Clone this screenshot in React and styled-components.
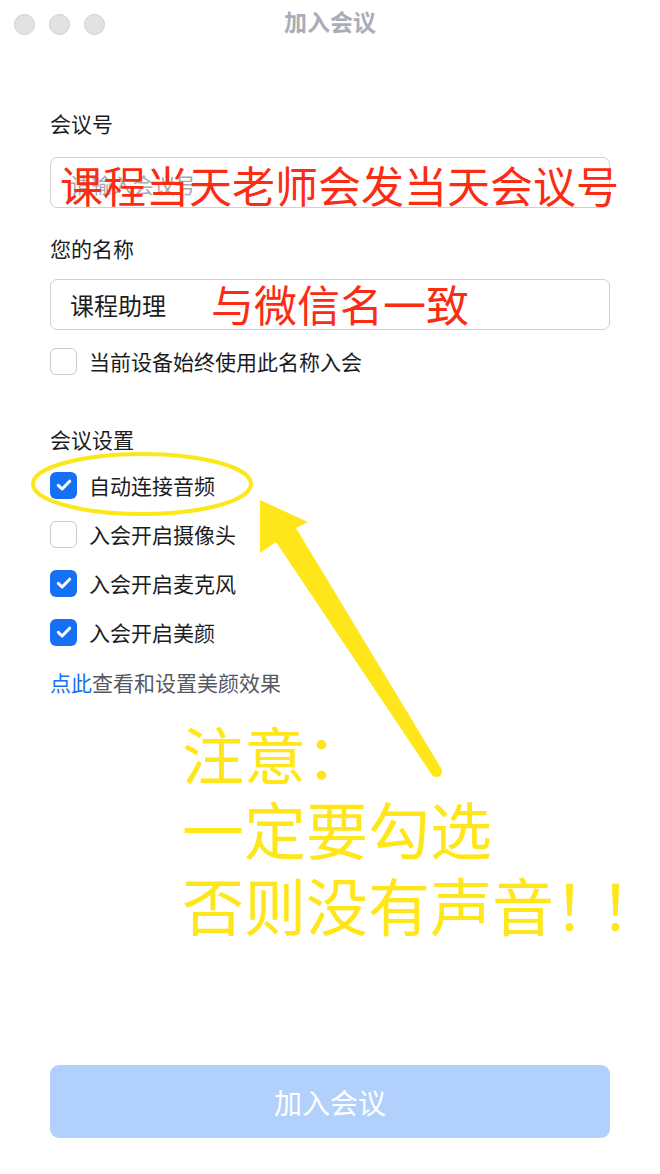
import React from "react";
import styled, { createGlobalStyle } from "styled-components";

const Global = createGlobalStyle`
  html, body { margin: 0; padding: 0; background: #ffffff; }
  body { font-family: "Noto Sans CJK SC", "Noto Sans", sans-serif; }
  * { box-sizing: border-box; }
`;

const FONT = `"Noto Sans CJK SC", "Noto Sans", sans-serif`;

const Window = styled.div`
  position: relative;
  width: 660px;
  height: 1174px;
  display: flex;
  flex-direction: column;
  background: #ffffff;
  overflow: hidden;
  font-family: ${FONT};
`;

const TitleBar = styled.div`
  position: relative;
  height: 48px;
  display: flex;
  align-items: center;
  justify-content: center;
  flex-shrink: 0;
`;

const Lights = styled.div`
  position: absolute;
  left: 14px;
  top: 14px;
  display: flex;
  gap: 14px;
`;

const Light = styled.span`
  width: 21px;
  height: 21px;
  border-radius: 50%;
  background: #e2e2e2;
  border: 1px solid #cfcfcf;
`;

const Title = styled.div`
  font-size: 23px;
  font-weight: 700;
  color: #a9adb8;
  line-height: 1;
  margin-top: -5px;
`;

const Form = styled.div`
  flex: 1;
  display: flex;
  flex-direction: column;
  padding: 62px 50px 36px;
`;

const Label = styled.div`
  font-size: 21px;
  line-height: 26px;
  color: #1c1c1e;
  margin-top: ${(p) => p.$mt || 0}px;
`;

const Field = styled.input`
  width: 560px;
  height: 51px;
  border: 1.5px solid #cfd0d5;
  border-radius: 7px;
  padding: 0 19px;
  font-family: ${FONT};
  font-size: 24px;
  color: #1c1c1e;
  outline: none;
  background: #fff;
  margin-top: ${(p) => p.$mt || 0}px;
  &::placeholder { color: #a6a9b1; font-size: 21px; }
`;

const Row = styled.label`
  display: flex;
  align-items: center;
  gap: 12px;
  height: 30px;
  font-size: 21px;
  color: #1c1c1e;
  margin-top: ${(p) => p.$mt || 0}px;
`;

const Box = styled.span`
  width: 27px;
  height: 27px;
  border-radius: 6px;
  display: flex;
  align-items: center;
  justify-content: center;
  background: ${(p) => (p.$on ? "#1670f4" : "#ffffff")};
  border: ${(p) => (p.$on ? "none" : "1.5px solid #c9cacf")};
`;

const Settings = styled.div`
  display: flex;
  flex-direction: column;
  gap: 19px;
  margin-top: 18px;
`;

const LinkLine = styled.div`
  font-size: 21px;
  line-height: 30px;
  color: #55585f;
  margin-top: 20px;
`;

const Blue = styled.span`
  color: #1670f4;
`;

const JoinButton = styled.button`
  margin-top: auto;
  width: 560px;
  height: 73px;
  border: none;
  border-radius: 9px;
  background: #b2d0fc;
  color: #ffffff;
  font-family: ${FONT};
  font-size: 28px;
`;

const Note = styled.div`
  position: absolute;
  left: ${(p) => p.$x}px;
  top: ${(p) => p.$y}px;
  font-family: ${FONT};
  font-size: ${(p) => p.$size}px;
  line-height: ${(p) => p.$size}px;
  color: ${(p) => p.$color};
  white-space: nowrap;
  pointer-events: none;
`;

const Bangs = styled.span`
  letter-spacing: -16px;
`;

const Overlay = styled.svg`
  position: absolute;
  left: 0;
  top: 0;
  pointer-events: none;
`;

function Check({ on, children, mt }) {
  return (
    <Row $mt={mt}>
      <Box $on={on}>
        {on && (
          <svg width="18" height="18" viewBox="0 0 18 18">
            <path d="M3.3 9.4l3.8 3.6 7.6-7.8" fill="none" stroke="#fff" strokeWidth="3" strokeLinecap="round" strokeLinejoin="round" />
          </svg>
        )}
      </Box>
      <span>{children}</span>
    </Row>
  );
}

export default function App() {
  return (
    <>
      <Global />
      <Window>
        <TitleBar>
          <Lights>
            <Light />
            <Light />
            <Light />
          </Lights>
          <Title>加入会议</Title>
        </TitleBar>
        <Form>
          <Label>会议号</Label>
          <Field $mt={21} placeholder="请输入会议号" readOnly />
          <Label $mt={27}>您的名称</Label>
          <Field $mt={18} defaultValue="课程助理" readOnly />
          <Check mt={16}>当前设备始终使用此名称入会</Check>
          <Label $mt={50}>会议设置</Label>
          <Settings>
            <Check on>自动连接音频</Check>
            <Check>入会开启摄像头</Check>
            <Check on>入会开启麦克风</Check>
            <Check on>入会开启美颜</Check>
          </Settings>
          <LinkLine>
            <Blue>点此</Blue>查看和设置美颜效果
          </LinkLine>
          <JoinButton>加入会议</JoinButton>
        </Form>

        <Note $x={60} $y={163} $size={43} $color="#fa2d14">课程当天老师会发当天会议号</Note>
        <Note $x={211} $y={282} $size={43} $color="#fa2d14">与微信名一致</Note>
        <Note $x={182} $y={722} $size={62} $color="#ffe61a">注意：</Note>
        <Note $x={182} $y={797} $size={62} $color="#ffe61a">一定要勾选</Note>
        <Note $x={182} $y={873} $size={62} $color="#ffe61a">
          否则没有声音<Bangs>！！</Bangs>
        </Note>

        <Overlay width="660" height="1174" viewBox="0 0 660 1174">
          <ellipse cx="142" cy="484" rx="109" ry="30" fill="none" stroke="#fbe71a" strokeWidth="4" />
          <polygon
            fill="#ffe61a"
            points="260,500 308,522 296,528 441,768 432,775 276,542 260,553"
          />
          <circle cx="436.5" cy="771.5" r="5.5" fill="#ffe61a" />
        </Overlay>
      </Window>
    </>
  );
}
